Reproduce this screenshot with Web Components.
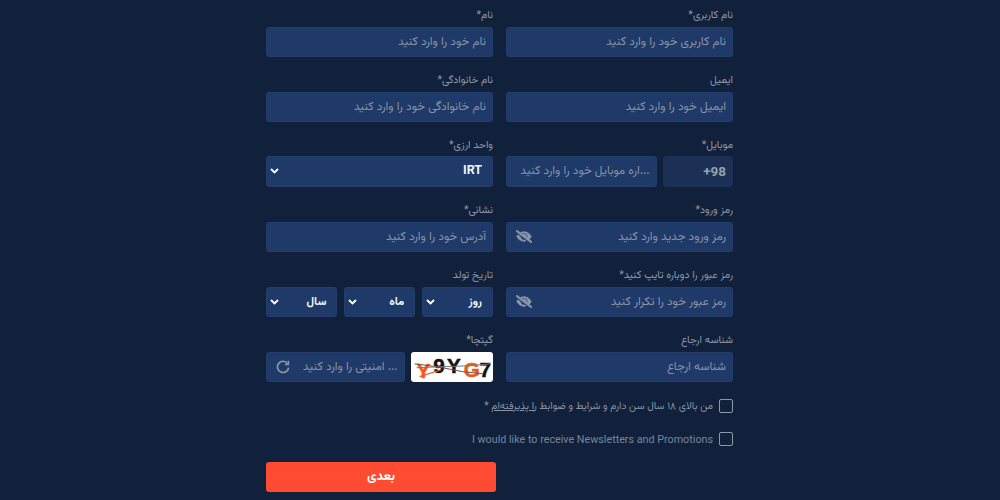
<!DOCTYPE html>
<html lang="fa" dir="rtl">
<head>
<meta charset="utf-8">
<title>ثبت نام</title>
<style>
  html, body { margin: 0; height: 500px; overflow: hidden; background: #12213b; }
  body { font-family: "Vazirmatn", "Noto Sans Arabic", "DejaVu Sans", sans-serif; }
</style>
</head>
<body>
<reg-form>
  <form-field label="نام کاربری*"><text-box>نام کاربری خود را وارد کنید</text-box></form-field>
  <form-field label="نام*"><text-box>نام خود را وارد کنید</text-box></form-field>
  <form-field label="ایمیل"><text-box>ایمیل خود را وارد کنید</text-box></form-field>
  <form-field label="نام خانوادگی*"><text-box>نام خانوادگی خود را وارد کنید</text-box></form-field>
  <form-field label="موبایل*" tall>
    <text-box style="width:70px;flex:none" dark strong><bdo dir="ltr">+98</bdo></text-box>
    <text-box>...اره موبایل خود را وارد کنید</text-box>
  </form-field>
  <form-field label="واحد ارزی*" tall><select-box big>IRT</select-box></form-field>
  <form-field label="رمز ورود*"><text-box icon="eye">رمز ورود جدید وارد کنید</text-box></form-field>
  <form-field label="نشانی*"><text-box>آدرس خود را وارد کنید</text-box></form-field>
  <form-field label="رمز عبور را دوباره تایپ کنید*"><text-box icon="eye">رمز عبور خود را تکرار کنید</text-box></form-field>
  <form-field label="تاریخ تولد">
    <select-box>روز</select-box>
    <select-box>ماه</select-box>
    <select-box>سال</select-box>
  </form-field>
  <form-field label="شناسه ارجاع"><text-box>شناسه ارجاع</text-box></form-field>
  <form-field label="گپتچا*">
    <captcha-image></captcha-image>
    <text-box icon="refresh">... امنیتی را وارد کنید</text-box>
  </form-field>
  <check-row slot="foot">من بالای ۱۸ سال سن دارم و شرایط و ضوابط <u>را پذیرفته‌ام</u> *</check-row>
  <check-row slot="foot" latin>I would like to receive Newsletters and Promotions</check-row>
  <submit-button slot="foot">بعدی</submit-button>
</reg-form>

<script>
class RegForm extends HTMLElement {
  connectedCallback() {
    this.attachShadow({mode: 'open'}).innerHTML = `
      <style>
        :host { display: block; width: 467px; margin: 0 267px 0 266px; padding-top: 8px; }
        .grid { display: grid; grid-template-columns: 227px 227px; column-gap: 13px; row-gap: 16.5px; }
        .foot { display: flex; flex-direction: column; padding-top: 17.5px; }
      </style>
      <div class="grid"><slot></slot></div>
      <div class="foot"><slot name="foot"></slot></div>`;
  }
}

class FormField extends HTMLElement {
  connectedCallback() {
    this.attachShadow({mode: 'open'}).innerHTML = `
      <style>
        :host { display: block; }
        label { display: block; height: 14px; line-height: 16px; margin-bottom: 5px; font-size: 10.5px; color: #8f98a8; }
        .row { display: flex; gap: 6.5px; height: 29.5px; }
        :host([tall]) label { margin-bottom: 4px; }
        :host([tall]) .row { height: 30.5px; }
      </style>
      <label>${this.getAttribute('label')}</label>
      <div class="row"><slot></slot></div>`;
  }
}

const ICONS = {
  eye: `<svg width="16" height="13" viewBox="0 0 640 512" fill="#8d97a8" stroke="#8d97a8" stroke-width="26"><path d="M320 400c-75.85 0-137.25-58.71-142.9-133.11L72.2 185.82c-13.79 17.3-26.48 35.59-36.72 55.59a32.35 32.35 0 0 0 0 29.19C89.71 376.41 197.07 448 320 448c26.91 0 52.87-4 77.89-10.46L346 397.39a144.13 144.13 0 0 1-26 2.61zm313.82 58.1l-110.55-85.44a331.25 331.25 0 0 0 81.25-102.07 32.35 32.35 0 0 0 0-29.19C550.29 135.59 442.93 64 320 64a308.15 308.15 0 0 0-147.32 37.7L45.46 3.37A16 16 0 0 0 23 6.18L3.37 31.45A16 16 0 0 0 6.18 53.9l588.36 454.73a16 16 0 0 0 22.46-2.81l19.64-25.27a16 16 0 0 0-2.82-22.45zm-183.72-142l-39.3-30.38A94.75 94.75 0 0 0 416 256a94.76 94.76 0 0 0-121.31-92.21A47.65 47.65 0 0 1 304 192a46.64 46.64 0 0 1-1.54 10l-73.61-56.89A142.31 142.31 0 0 1 320 112a143.92 143.92 0 0 1 144 144c0 21.63-5.29 41.79-13.9 60.11z"/></svg>`,
  refresh: `<svg width="14" height="14" viewBox="0 0 14 14" fill="none" stroke="#8d97a8" stroke-width="1.7"><path d="M11.6 3.6A5.6 5.6 0 1 0 12.6 7.6"/><path d="M12.4 .8v3.6H8.8" stroke-width="1.5"/></svg>`
};

class TextBox extends HTMLElement {
  connectedCallback() {
    const icon = ICONS[this.getAttribute('icon')] || '';
    this.attachShadow({mode: 'open'}).innerHTML = `
      <style>
        :host { display: flex; flex: 1; min-width: 0; box-sizing: border-box; align-items: center; justify-content: space-between;
                padding: 0 6px 0 9px; background: #1f3a68; border: 1px solid #233e6d; border-radius: 3px;
                color: #8a93a4; font-size: 11.9px; white-space: nowrap; }
        :host([dark]) { background: #1b3054; border-color: #1b3054; }
        :host([strong]) { font-family: Roboto, sans-serif; font-weight: 700; font-size: 13.5px; color: #97a0b0; }
        span { display: block; overflow: hidden; }
        .ic { display: flex; flex: none; }
      </style>
      <span><slot></slot></span><div class="ic">${icon}</div>`;
  }
}

class SelectBox extends HTMLElement {
  connectedCallback() {
    this.attachShadow({mode: 'open'}).innerHTML = `
      <style>
        :host { display: flex; flex: 1; min-width: 0; box-sizing: border-box; align-items: center; justify-content: space-between;
                padding: 0 10px 0 3px; background: #1f3a68; border: 1px solid #233e6d; border-radius: 3px;
                color: #f2f4f8; font-size: 11.5px; font-weight: 700; }
        :host([big]) { font-size: 12.5px; }
        svg { display: block; }
      </style>
      <slot></slot>
      <svg width="9" height="6" viewBox="0 0 9 6" fill="none" stroke="#fff" stroke-width="1.9"><path d="M1 1l3.5 3.5L8 1"/></svg>`;
  }
}

class CaptchaImage extends HTMLElement {
  connectedCallback() {
    this.attachShadow({mode: 'open'}).innerHTML = `
      <style>
        :host { display: block; flex: none; width: 82px; background: #fff; border-radius: 3px; overflow: hidden; }
        svg { display: block; direction: ltr; }
        text { font-family: "Liberation Sans", sans-serif; font-weight: 700; font-size: 21px; stroke-width: .5px; }
      </style>
      <svg width="82" height="29.5" viewBox="0 0 82 30">
        <text x="5" y="26" fill="#ef5a1e" stroke="#ef5a1e">Y</text>
        <text x="22" y="21" fill="#111" stroke="#111">9</text>
        <text x="36" y="21" fill="#111" stroke="#111">Y</text>
        <text x="53" y="25" fill="#ef5a1e" stroke="#ef5a1e">G</text>
        <text x="69" y="25" fill="#111" stroke="#111">7</text>
        <path d="M3 12L26 15L52 20L72 22" stroke="#555" stroke-width="1" fill="none"/>
        <path d="M5 16L30 15L58 14L80 12" stroke="#777" stroke-width="1" fill="none"/>
        <path d="M8 25L30 18" stroke="#ef5a1e" stroke-width="1.2" fill="none"/>
      </svg>`;
  }
}

class CheckRow extends HTMLElement {
  connectedCallback() {
    this.attachShadow({mode: 'open'}).innerHTML = `
      <style>
        :host { display: flex; align-items: center; gap: 6px; height: 14px; margin-bottom: 19px; color: #8792a5; font-size: 10.2px; white-space: nowrap; }
        :host([latin]) { font-family: Roboto, sans-serif; font-size: 10.75px; color: #76849c; margin-bottom: 16px; }
        .box { box-sizing: border-box; flex: none; width: 14px; height: 14px; border: 1.5px solid #8d97a8; border-radius: 2px; }
      </style>
      <div class="box"></div><span><slot></slot></span>`;
  }
}

class SubmitButton extends HTMLElement {
  connectedCallback() {
    this.attachShadow({mode: 'open'}).innerHTML = `
      <style>
        :host { display: flex; align-items: center; justify-content: center; align-self: flex-end; width: 230px; height: 30px;
                background: #ff4b31; border-radius: 3px; color: #fff; font-size: 13px; font-weight: 700; }
      </style>
      <slot></slot>`;
  }
}

customElements.define('reg-form', RegForm);
customElements.define('form-field', FormField);
customElements.define('text-box', TextBox);
customElements.define('select-box', SelectBox);
customElements.define('captcha-image', CaptchaImage);
customElements.define('check-row', CheckRow);
customElements.define('submit-button', SubmitButton);
</script>
</body>
</html>
